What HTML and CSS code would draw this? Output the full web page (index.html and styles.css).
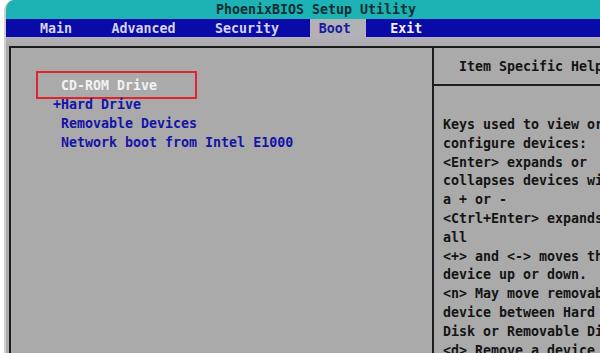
FILE: index.html
```html
<!DOCTYPE html>
<html lang="en">
<head>
  <meta charset="UTF-8">
  <meta name="viewport" content="width=device-width, initial-scale=1.0">
  <title>PhoenixBIOS Setup Utility</title>
  <link rel="stylesheet" href="styles.css">
</head>
<body>

<div class="screen">
  <div class="title-bar">PhoenixBIOS Setup Utility</div>

  <div class="menu-bar">
    <span class="menu-item">Main</span>
    <span class="menu-item">Advanced</span>
    <span class="menu-item">Security</span>
    <span class="menu-item active">Boot</span>
    <span class="menu-item exit">Exit</span>
  </div>

  <div class="content">
    <div class="frame">
      <div class="boot-list">
        <div class="boot-item selected">CD-ROM Drive</div>
        <div class="boot-item expandable">+Hard Drive</div>
        <div class="boot-item">Removable Devices</div>
        <div class="boot-item">Network boot from Intel E1000</div>
      </div>

      <div class="help-panel">
        <div class="help-title">Item Specific Help</div>
        <div class="help-text">Keys used to view or
configure devices:
&lt;Enter&gt; expands or
collapses devices with
a + or -
&lt;Ctrl+Enter&gt; expands
all
&lt;+&gt; and &lt;-&gt; moves the
device up or down.
&lt;n&gt; May move removable
device between Hard
Disk or Removable Disk
&lt;d&gt; Remove a device</div>
      </div>
    </div>
  </div>
</div>

</body>
</html>
```

FILE: styles.css
```css
body {
  margin: 0;
  padding: 0;
  background-color: #ffffff;
  overflow: hidden;
}

.screen {
  height: 353px;
  margin-left: 4px;
  display: flex;
  flex-direction: column;
  background-color: #aaaaaa;
  border-top-left-radius: 10px;
  border-left: 2px solid #cfcfcf;
  overflow: hidden;
  font-family: "DejaVu Sans Mono", "Liberation Mono", monospace;
  font-size: 13.3px;
  font-weight: bold;
}

.title-bar {
  height: 19px;
  line-height: 20px;
  background-color: #1db2b4;
  color: #0b2f33;
  text-align: center;
  padding-left: 28px;
  margin-left: -2px;
}

.menu-bar {
  height: 18px;
  line-height: 19px;
  background-color: #0a0aa8;
  display: flex;
  gap: 21.5px;
  padding-left: 27px;
  margin-left: -2px;
}

.menu-item {
  padding: 0 9px;
  color: #d4d4ee;
}

.menu-item.active {
  background-color: #b2b2b6;
  color: #1a1aa0;
  padding-right: 15px;
  margin-right: -6px;
}

.menu-item.exit {
  color: #f4f4ff;
}

.content {
  flex: 1;
  padding-top: 9px;
  background: linear-gradient(#b4b0bc, #aaaaaa 10px);
}

.frame {
  height: 100%;
  margin-left: 3px;
  border-top: 2px solid #1c1c1c;
  border-left: 2px solid #1c1c1c;
  display: grid;
  grid-template-columns: 421px 1fr;
}

.boot-list {
  padding-top: 28px;
  padding-left: 50px;
}

.boot-item {
  position: relative;
  height: 19px;
  line-height: 19px;
  color: #1414a6;
  white-space: pre;
}

.boot-item.selected {
  color: #f2f2f2;
}

.boot-item.selected::before {
  content: "";
  position: absolute;
  left: -25px;
  top: -5px;
  width: 161px;
  height: 28px;
  box-sizing: border-box;
  border: 2px solid #e0262c;
}

.boot-item.expandable {
  margin-left: -8px;
}

.help-panel {
  border-left: 2px solid #1c1c1c;
  overflow: hidden;
}

.help-title {
  height: 36px;
  line-height: 37px;
  padding-left: 25px;
  border-bottom: 2px solid #1c1c1c;
  color: #141414;
  white-space: pre;
}

.help-text {
  padding-top: 30px;
  padding-left: 9px;
  line-height: 18.8px;
  color: #141414;
  white-space: pre;
}
```
